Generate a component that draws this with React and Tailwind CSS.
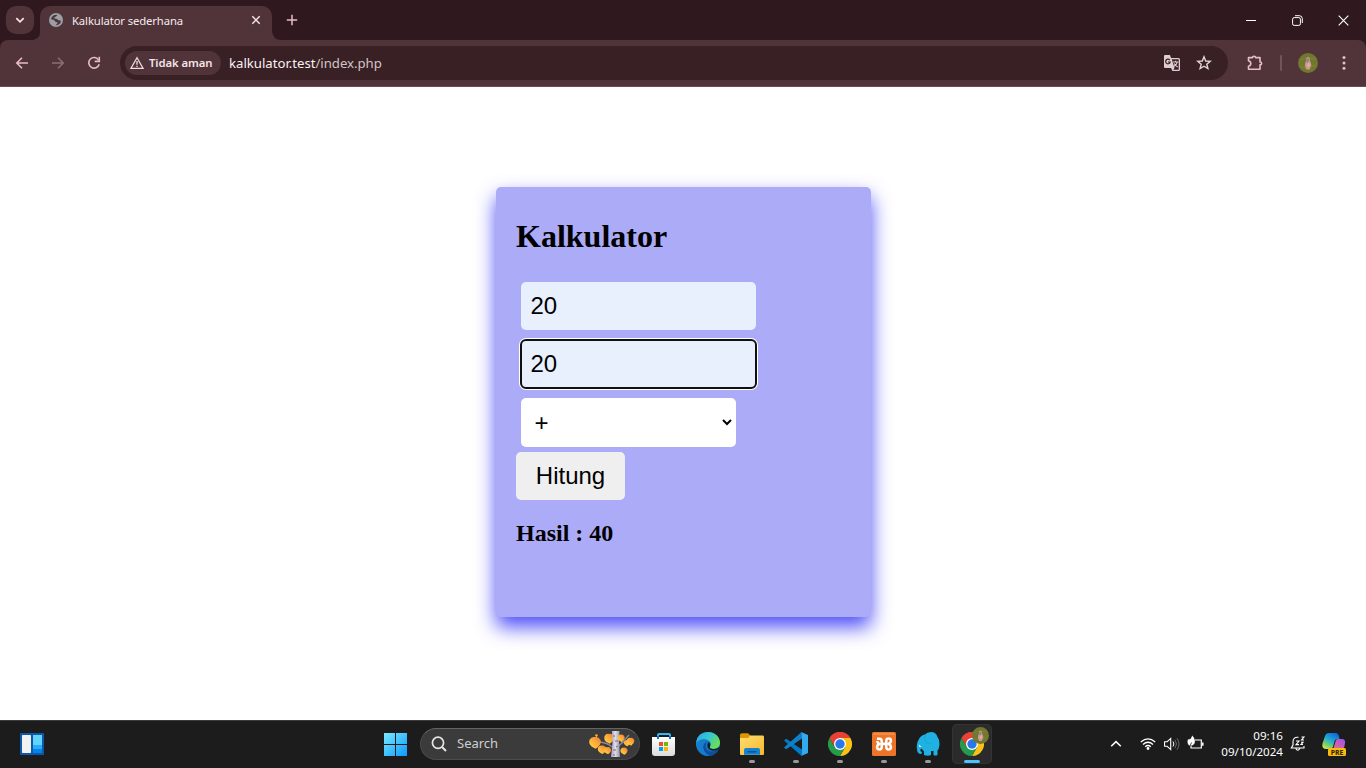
const ui = "font-['Noto_Sans','Open_Sans',sans-serif]";

function Svg({ size = 16, box = 16, className = "", children }) {
  return (
    <svg width={size} height={size} viewBox={`0 0 ${box} ${box}`} fill="none" className={`shrink-0 ${className}`}>
      {children}
    </svg>
  );
}

function Globe() {
  return (
    <Svg size={14} box={14}>
      <circle cx="7" cy="7" r="7" fill="#9aa0a6" />
      <path d="M4.8 2.2 Q7.5 1.2 8.3 2 L7 3.6 L5.3 4.3 L5.6 5.5 L8 5.9 L9.2 7.3 L11.8 7.4 Q12.2 9.5 10 11.3 Q8.4 12.6 6.6 12.3 L8.2 10.8 L8.5 9.6 L6.2 8.7 L5.2 6.9 L2 6.2 Q2.2 3.6 4.8 2.2Z" fill="#50343a" />
      <path d="M1.8 6.8 L4 7.4 L4.8 9.7 L6 10.8 L6 12.2 Q2 11 1.8 6.8Z" fill="#9aa0a6" />
    </Svg>
  );
}

function TabBar() {
  return (
    <div className="flex h-10 items-end bg-[#2f181e] pl-[6px]">
      <button className="mb-[6px] flex h-7 w-7 items-center justify-center rounded-[10px] bg-[#50343a]">
        <Svg size={10} box={10}><path d="M1.3 3.2 L5 6.9 L8.7 3.2" stroke="#f5e4e7" strokeWidth="1.7" /></Svg>
      </button>
      <svg width="6" height="34" viewBox="0 0 6 34" className="shrink-0"><path d="M6 26 Q6 33 -2 34 L6 34Z" fill="#50343a" /></svg>
      <div className="flex h-[34px] w-[232px] items-center rounded-t-[10px] bg-[#50343a] pr-[11px] pb-[6px] pl-[9px]">
        <Globe />
        <span className="ml-[9px] grow pt-px text-[11.3px] leading-4 tracking-[-0.12px] whitespace-nowrap text-[#f5e9eb]">Kalkulator sederhana</span>
        <Svg size={10} box={10}><path d="M1.3 1.3 L8.7 8.7 M8.7 1.3 L1.3 8.7" stroke="#f5e4e7" strokeWidth="1.5" /></Svg>
      </div>
      <svg width="10" height="34" viewBox="0 0 10 34" className="shrink-0"><path d="M0 24 Q0 34 10 34 L0 34Z" fill="#50343a" /></svg>
      <Svg size={12} box={12} className="mb-[14px] ml-1"><path d="M6 .8V11.2M.8 6H11.2" stroke="#e8bdc5" strokeWidth="1.5" /></Svg>
      <div className="mb-[14px] ml-auto flex items-center gap-[35px] pr-[17px]">
        <Svg size={12} box={12}><path d="M1 6.5H11" stroke="#fff" /></Svg>
        <Svg size={11} box={11}><rect x=".6" y="2.6" width="7.8" height="7.8" rx="1.6" stroke="#fff" /><path d="M3 .7H7.4Q10.3 .7 10.3 3.6V8" stroke="#fff" /></Svg>
        <Svg size={11} box={11}><path d="M.7 .7L10.3 10.3M10.3 .7L.7 10.3" stroke="#fff" strokeWidth="1.1" /></Svg>
      </div>
    </div>
  );
}

function Toolbar() {
  return (
    <div className="bg-[#2f181e]">
      <div className="flex h-[47px] items-center rounded-t-[8px] border-b border-[#664f53] bg-[#50343a] pl-[14px]">
        <Svg><path d="M14 8H3M8 2.8L2.8 8L8 13.2" stroke="#e8bdc5" strokeWidth="1.6" /></Svg>
        <Svg className="ml-5"><path d="M2 8H13M8 2.8L13.2 8L8 13.2" stroke="#8d6d73" strokeWidth="1.6" /></Svg>
        <Svg className="ml-5">
          <path d="M12.7 5.2A5.3 5.3 0 1 0 13.2 9.2" stroke="#e8bdc5" strokeWidth="1.6" />
          <path d="M13.3 1.8V6.4H8.7" stroke="#e8bdc5" strokeWidth="1.6" />
        </Svg>
        <div className="ml-[18px] flex h-[34px] w-[1108px] items-center rounded-full bg-[#382024] pl-[5px]">
          <div className="flex h-6 w-24 shrink-0 items-center rounded-full bg-[#50343a] pl-[5px]">
            <Svg size={14} box={14}><path d="M7 1.7L13 12.3H1Z M7 5V8.7M7 9.7V11.1" stroke="#f0dde0" strokeWidth="1.3" /></Svg>
            <span className="ml-[5px] text-[11.3px] font-semibold tracking-[-0.08px] whitespace-nowrap text-[#f5e4e7]">Tidak aman</span>
          </div>
          <span className="ml-2 grow pt-[2px] text-[13.2px] tracking-[-0.02px] whitespace-nowrap text-[#d5c4c7]"><span className="text-[#fcf0f2]">kalkulator.test</span>/index.php</span>
          <Svg size={18} box={18} className="mr-[15px]">
            <path d="M2 1H7L8 4H15.5Q17 4 17 5.5V15.5Q17 17 15.5 17H9.5L8 14H2Q1 14 1 13V2Q1 1 2 1Z" fill="#dfced1" />
            <path d="M8.8 5.2H15.7V15.8H10.3L11.5 14Z" fill="#382024" />
            <path d="M6.8 6.1A2.3 2.3 0 1 0 7.2 8H5" stroke="#382024" strokeWidth="1.2" />
            <path d="M10 8H15.4M12.6 6.7V8M14.2 8Q13.7 11 10.8 12.6M11.2 9.5Q12.4 11.8 14.8 13" stroke="#dfced1" strokeWidth="1.1" />
          </Svg>
          <Svg className="mr-4"><path d="M8 1.8L9.7 6L14.3 6.3L10.8 9.2L11.9 13.6L8 11.2L4.1 13.6L5.2 9.2L1.7 6.3L6.3 6Z" stroke="#e4d3d6" strokeWidth="1.4" /></Svg>
        </div>
        <Svg size={18} box={18} className="ml-[18px]"><path d="M2.5 3.6H6.5Q6.5 2.2 8 2.2Q9.5 2.2 9.5 3.6H14V8Q15.6 8 15.6 9.4Q15.6 10.8 14 10.8V15.3H2.5V12.2Q4.8 11.6 4.8 9.4Q4.8 7.3 2.5 6.8Z" stroke="#e8bdc5" strokeWidth="1.6" strokeLinejoin="round" /></Svg>
        <div className="ml-4 h-4 w-[2px] rounded-full bg-[#72535a]" />
        <div className="ml-4"><Avatar size={20} /></div>
        <Svg className="ml-[18px]"><g fill="#e8bdc5"><circle cx="8" cy="2.5" r="1.5" /><circle cx="8" cy="8" r="1.5" /><circle cx="8" cy="13.3" r="1.5" /></g></Svg>
      </div>
    </div>
  );
}

function Avatar({ size }) {
  return (
    <Svg size={size} box={20}>
      <circle cx="10" cy="10" r="10" fill="#71772d" />
      <path d="M2 7Q8 4 18 6M2 13Q5 15 7 14M13 14L18 12" stroke="#7a8132" strokeWidth="1.5" />
      <path d="M9.8 4Q12 4 11.8 7L13.5 12.3L12.3 14.5L11.8 16.5H8.4L7.2 14L7 11.5L8.2 7Q7.8 4.5 9.8 4Z" fill="#c99a90" />
      <path d="M8.8 5.5H11.2L10.8 8.5L9.8 10L8.3 9Z" fill="#8c8285" /><path d="M10.5 9L12 12L10.5 14.5L9 12.5Z" fill="#e5ada3" />
    </Svg>
  );
}

function Calculator() {
  return (
    <main className="flex h-[633px] justify-center bg-white pt-[100px] pl-[1px] font-['Liberation_Serif',serif] text-black">
      <section className="h-[430px] w-[375px] rounded-[5px] bg-[#acabf7] px-5 pt-[31px] shadow-[0_10px_20px_0_rgba(0,0,245,0.7)]">
        <h1 className="text-[32px] leading-[37px] font-bold">Kalkulator</h1>
        <form className="mt-[27px] flex flex-col items-start font-['Liberation_Sans',Arial,sans-serif] text-[24px] leading-7" onSubmit={(e) => e.preventDefault()}>
          <input className="ml-[5px] h-12 w-[235px] rounded-[5px] bg-[#e8f0fe] px-[9.4px] outline-none" defaultValue="20" />
          <input className="mt-[9px] ml-1 h-[50px] w-[237px] rounded-[6px] border-2 border-[#101010] bg-[#e8f0fe] px-[8.4px] ring-1 ring-white outline-none" defaultValue="20" />
          <div className="mt-[9px] ml-[5px] flex h-[49px] w-[215px] items-center justify-between rounded-[5px] bg-white pr-1 pl-[13.4px]">
            <span>+</span>
            <Svg size={10} box={10} className="mb-px"><path d="M1 3L5 7L9 3" stroke="#000" strokeWidth="2" /></Svg>
          </div>
          <button className="mt-[5px] h-12 w-[109px] rounded-[5px] bg-[#efefef] text-center">Hitung</button>
        </form>
        <h2 className="mt-[19px] text-[24px] leading-7 font-bold">Hasil : 40</h2>
      </section>
    </main>
  );
}

function Chrome() {
  return (
    <Svg size={24} box={24}>
      <path d="M12 12L1.6 6A12 12 0 0 1 22.4 6Z" fill="#ea4335" />
      <path d="M12 12V6H22.4A12 12 0 0 1 12 24L17.2 15Z" fill="#fbc116" />
      <path d="M12 12L17.2 15L12 24A12 12 0 0 1 1.6 6L6.8 15Z" fill="#269b4b" />
      <path d="M12 6H22.4A12 12 0 0 0 1.6 6L6.8 15Z" fill="#e84235" />
      <circle cx="12" cy="12" r="6" fill="#fff" /><circle cx="12" cy="12" r="4.7" fill="#2878eb" />
    </Svg>
  );
}

function TaskItem({ children, running, active }) {
  return (
    <div className={`flex h-10 w-10 shrink-0 flex-col items-center rounded-[5px] pt-2 ${active ? "bg-[#2b2b2b] ring-1 ring-[#333] ring-inset" : ""}`}>
      <div className="relative h-6 w-6">{children}</div>
      {running && <span className="mt-1 h-[3px] w-[6px] rounded-full bg-[#999]" />}
      {active && <span className="mt-1 h-[3px] w-4 rounded-full bg-[#4cc2ff]" />}
    </div>
  );
}

function Leaf({ x, y, s }) {
  return (
    <g transform={`translate(${x} ${y}) scale(${s})`}>
      <path d="M0 -6Q-4 -7 -6 -3Q-8 3 -1 6L1 7Q8 2 6 -3Q4 -7 0 -6Z" fill="url(#leaf)" />
    </g>
  );
}

function Autumn() {
  return (
    <svg width="46" height="28" viewBox="0 0 46 28" className="shrink-0">
      <defs>
        <linearGradient id="leaf" x1="0" x2="1" y1="1" y2="0"><stop stopColor="#ffdb42" /><stop offset=".55" stopColor="#fcaa38" /><stop offset="1" stopColor="#ec7838" /></linearGradient>
        <linearGradient id="trunk"><stop stopColor="#aaa7bb" /><stop offset=".5" stopColor="#dedce5" /><stop offset="1" stopColor="#9691aa" /></linearGradient>
      </defs>
      <path d="M11 12Q19 13 23 17M30 16L40 5M32 12L35 7M33 13L40 11" stroke="#8c8799" strokeWidth="1.3" fill="none" />
      <Leaf x={20} y={8.5} s={0.75} />
      <path d="M23 1H30.5L30 10L31 27H22L23.5 13Z" fill="url(#trunk)" />
      <path d="M24 6H26M27 17L29 16M24 20L27 20M24 25H26M26 11H29" stroke="#716b7f" />
      <Leaf x={6} y={12.5} s={0.9} /><Leaf x={13} y={19.5} s={0.65} /><Leaf x={18.5} y={20.5} s={0.55} />
      <Leaf x={32} y={8} s={0.56} /><Leaf x={38} y={13} s={0.48} /><Leaf x={41.5} y={11.5} s={0.6} />
      <Leaf x={35} y={21} s={0.55} /><Leaf x={7.5} y={5.5} s={0.22} />
    </svg>
  );
}

function Edge() {
  return (
    <Svg size={24} box={24}>
      <defs>
        <linearGradient id="e1" x1="0" y1="0" x2="1" y2=".5"><stop stopColor="#2ca6e1" /><stop offset=".5" stopColor="#31c6d8" /><stop offset="1" stopColor="#6bdf55" /></linearGradient>
        <linearGradient id="e2" x1="0" y1="0" x2=".5" y2="1"><stop stopColor="#259ee0" /><stop offset="1" stopColor="#0b63bd" /></linearGradient>
      </defs>
      <circle cx="12" cy="12" r="12" fill="url(#e2)" />
      <path d="M.2 10Q2 0 12 0C20 0 24 6 24 10.8C24 15 20.8 17 17.5 17C14.5 17 13.2 15.6 14 14.4C17 9.5 8 3 .2 10Z" fill="url(#e1)" />
      <path d="M14 14.4Q16 10 11 9.4Q7.2 11 7.4 15Q8 21 13 24Q6 24 3 19Q-1 9 7.5 7.6Q14.5 7.7 15 12Q15 13 14 14.4Z" fill="#167cce" />
      <path d="M11.2 9.5Q6.7 13 10 18Q13.8 22.2 22.5 17.5Q19.5 22 16 23Q8 22 7.4 15Q7.4 11 11.2 9.5Z" fill="#0d4c96" />
      <path d="M9.6 14Q9.5 18.5 14.5 19.8Q19 20.6 22.6 17.4Q20 21.8 16 23.2Q8.5 22 7.6 16Q7.5 11.5 11.2 9.5Q9.7 11.5 9.6 14Z" fill="#0f4f9c" />
      <path d="M12.2 9.9Q15 11.2 14 14.4Q12.8 16.4 17.2 17.1Q20.5 17.2 23.4 14.9L22.6 17.2Q18.6 19.4 14.6 17.9Q9.7 15.6 12.2 9.9Z" fill="#1c1c1c" />
    </Svg>
  );
}

function Taskbar() {
  return (
    <footer className="flex h-12 items-center border-t border-[#3b3b3b] bg-[#1c1c1c] pb-[2px] text-white">
      <div className="flex w-[376px] shrink-0 pl-5">
        <Svg size={24} box={24}>
          <rect y="1" width="24" height="22" rx="1" fill="#0a59ad" />
          <rect x="2" y="3" width="9" height="18" rx=".7" fill="#f1f1f1" /><rect x="13" y="3" width="9" height="10" fill="#62d4fc" /><rect x="13" y="13" width="9" height="4" fill="#29acf7" /><rect x="13" y="17" width="9" height="4" fill="#0583e8" />
        </Svg>
      </div>
      <TaskItem>
        <Svg size={24} box={24}>
          <defs><linearGradient id="win" gradientUnits="userSpaceOnUse" x1="0" y1="0" x2="24" y2="24"><stop stopColor="#7cebff" /><stop offset="1" stopColor="#0897ff" /></linearGradient></defs>
          <path d="M0 1H11V12H0ZM12 1H23V12H12ZM0 13H11V24H0ZM12 13H23V24H12Z" fill="url(#win)" />
        </Svg>
      </TaskItem>
      <div className="ml-1 flex h-8 w-[220px] shrink-0 items-center rounded-full border border-[#4b4b4b] border-t-[#646464] bg-[#3b3b3b] pr-[4px] pl-[10px]">
        <Svg><circle cx="7" cy="6.8" r="5.6" stroke="#e6e6e6" strokeWidth="1.7" /><path d="M11 11L15 15" stroke="#e6e6e6" strokeWidth="2" /></Svg>
        <span className="ml-[10px] grow pt-px text-[13px] text-[#d0d0d0]">Search</span>
        <Autumn />
      </div>
      <div className="ml-1 flex gap-1">
        <TaskItem>
          <Svg size={24} box={24}>
            <defs><linearGradient id="bag" x1="0" y1="0" x2="0" y2="1"><stop stopColor="#fff" /><stop offset="1" stopColor="#dcdcdc" /></linearGradient></defs>
            <path d="M6 7V3Q6 2 7 2H17Q18 2 18 3V7" stroke="#38b7f1" strokeWidth="2" /><path d="M0 5H23V21Q23 24 20 24H3Q0 24 0 21Z" fill="url(#bag)" /><path d="M6 4V7M18 4V7" stroke="#0879bd" strokeWidth="2" /><path d="M7 10H11V14H7Z" fill="#e9512a" /><path d="M12 10H16V14H12Z" fill="#7db500" /><path d="M7 15H11V19H7Z" fill="#009fe8" /><path d="M12 15H16V19H12Z" fill="#ffb500" />
          </Svg>
        </TaskItem>
        <TaskItem><Edge /></TaskItem>
        <TaskItem running>
          <Svg size={24} box={24}>
            <defs><linearGradient id="fold" x1="0" y1="0" x2="1" y2="1"><stop stopColor="#ffdc75" /><stop offset="1" stopColor="#f6b927" /></linearGradient></defs>
            <path d="M0 3Q0 1.2 2 1.2H8L11 4V7H0Z" fill="#dc9600" /><path d="M0 6H8L10.5 3.5H23Q24 3.5 24 5V22Q24 23 23 23H1Q0 23 0 22Z" fill="url(#fold)" />
            <path d="M4 22.7V18Q4 16 6 16H18Q20 16 20 18V22.7Z" fill="#1780cf" /><rect x="7.5" y="19" width="9" height="1.5" rx=".7" fill="#08559b" />
          </Svg>
        </TaskItem>
        <TaskItem running>
          <Svg size={24} box={24}><path d="M0 8.4L2.2 6.7L18 17.5V24L17 23.6Z" fill="#0079c8" /><path d="M0 15.6L2.2 17.3L18 6.5V0L17 .4Z" fill="#1080cb" /><path d="M17.2 0L24 3V21L17.2 24Q18 23.5 18 22V2Q18 .8 17.2 0Z" fill="#33aaf0" /></Svg>
        </TaskItem>
        <TaskItem running><Chrome /></TaskItem>
        <TaskItem running>
          <Svg size={24} box={24}>
            <rect width="24" height="24" rx="1.5" fill="#ed7429" /><path d="M1.5 2H22.5" stroke="#f5a66a" />
            <path d="M5 6.8H7.5Q9.7 6.8 9.7 9V11.8H14.3V8.8Q14.3 6.6 16.6 6.6Q18.9 6.6 18.9 8.8Q18.9 11 16.6 11.8Q18.9 12.8 18.9 15.2Q18.9 17.4 16.6 17.4Q14.3 17.4 14.3 15.2V12H9.7V15.2Q9.7 17.4 7.4 17.4Q5.1 17.4 5.1 15.2Q5.1 12.8 7.4 11.8Q5.5 11 5.1 9" stroke="#fff" strokeWidth="2.5" strokeLinejoin="round" />
          </Svg>
        </TaskItem>
        <TaskItem running>
          <Svg size={24} box={24}>
            <path d="M3 7Q5 3 9 2.5Q11 0 15 0Q20 0 21.5 5Q24 8 23.3 14Q23 17 21.5 18.5V23Q19 24 17.5 23V19H15V23Q12 24.5 8 23V19.5L6 17Q5 16 4.2 18Q4.5 20 6 20Q6 22.5 4 22Q1 21 1 17Q0 11 3 7Z" fill="#1eb1e2" />
            <path d="M9 3.5Q8 8 10.5 11Q14 13 15.5 10" stroke="#159fd0" strokeWidth=".7" /><path d="M2.8 12.5L5.6 15L3.2 14.8Z" fill="#fff" />
          </Svg>
        </TaskItem>
        <TaskItem active><Chrome /><div className="absolute -top-[5px] left-[12px]"><Avatar size={17} /></div></TaskItem>
      </div>
      <div className="ml-auto flex items-center pr-5">
        <Svg size={12} box={12}><path d="M1.2 8.3L6 3.6L10.8 8.3" stroke="#fff" strokeWidth="1.5" /></Svg>
        <Svg className="ml-[18px]"><path d="M.8 6Q8 -.2 15.2 6M3 8.4Q8 4 13 8.4M5.2 10.7Q8 8.3 10.8 10.7" stroke="#fff" strokeWidth="1.3" /><circle cx="8" cy="12.5" r="1.4" fill="#fff" /></Svg>
        <Svg className="ml-2"><path d="M.6 5.7H3.2L6.7 2.4V13.6L3.2 10.3H.6Z" stroke="#fff" strokeWidth="1.1" /><path d="M9 5.5Q10.8 8 9 10.5" stroke="#fff" /><path d="M11 3.8Q14 8 11 12.2M13 2.2Q17 8 13 13.8" stroke="#666" /></Svg>
        <Svg size={17} box={17} className="ml-[7px]"><path d="M8 5H14.3V13H4V11" stroke="#fff" strokeWidth="1.2" /><path d="M15.8 7.5V10.7" stroke="#fff" strokeWidth="1.5" /><path d="M5.2 .5Q9 4 7.5 8.5Q5.5 11.5 2.2 10.5Q-.3 8.5 .9 4.5Q2 4 3 4.3Q4.5 3 5.2 .5Z" fill="#fff" /><path d="M2.2 12.5L4.6 7.5" stroke="#1c1c1c" strokeWidth=".8" /></Svg>
        <div className="ml-4 w-[63px] text-right text-[11.6px] leading-4 whitespace-nowrap"><div>09:16</div><div>09/10/2024</div></div>
        <Svg size={16} box={16} className="ml-[7px]"><path d="M8.5 1.3Q3 .6 3 6V9L1.3 12H14V10M5.8 12.5Q7.8 16 9.8 12.5M6 5H9L6 8.6H9M11.5 1H14L11.5 4H14M11 6.3H13L11 8.5H13" stroke="#fff" strokeWidth="1.1" /></Svg>
        <Svg size={24} box={24} className="ml-4">
          <defs><linearGradient id="cop" x1=".8" y1="0" x2=".2" y2="1"><stop stopColor="#0b62e0" /><stop offset=".45" stopColor="#1fa8d4" /><stop offset=".8" stopColor="#7ed36c" /><stop offset="1" stopColor="#d5e63a" /></linearGradient><linearGradient id="cop2" x1="1" y1="0" x2="0" y2="1"><stop stopColor="#9653eb" /><stop offset="1" stopColor="#f76a83" /></linearGradient></defs>
          <path d="M7 1H14Q16.2 1 17 4.5L17.6 7H15Q13 7 12 11L11 15Q10 17 8 17H4Q-.4 17 .5 11.5L3 4Q4 1 7 1Z" fill="url(#cop)" />
          <path d="M15.5 7H20Q23.8 7 23 11.5L21.5 18H11L13.2 10.5Q14 7 15.5 7Z" fill="url(#cop2)" />
          <rect x="6" y="16" width="18" height="8" rx="1.5" fill="#f9bd0b" /><text x="15" y="22.5" textAnchor="middle" fontFamily="Noto Sans, sans-serif" fontSize="6.8" fontWeight="800" fill="#332500">PRE</text>
        </Svg>
      </div>
    </footer>
  );
}

export default function App() {
  return (
    <div className={`h-[768px] w-[1366px] overflow-hidden ${ui}`}>
      <TabBar />
      <Toolbar />
      <Calculator />
      <Taskbar />
    </div>
  );
}
